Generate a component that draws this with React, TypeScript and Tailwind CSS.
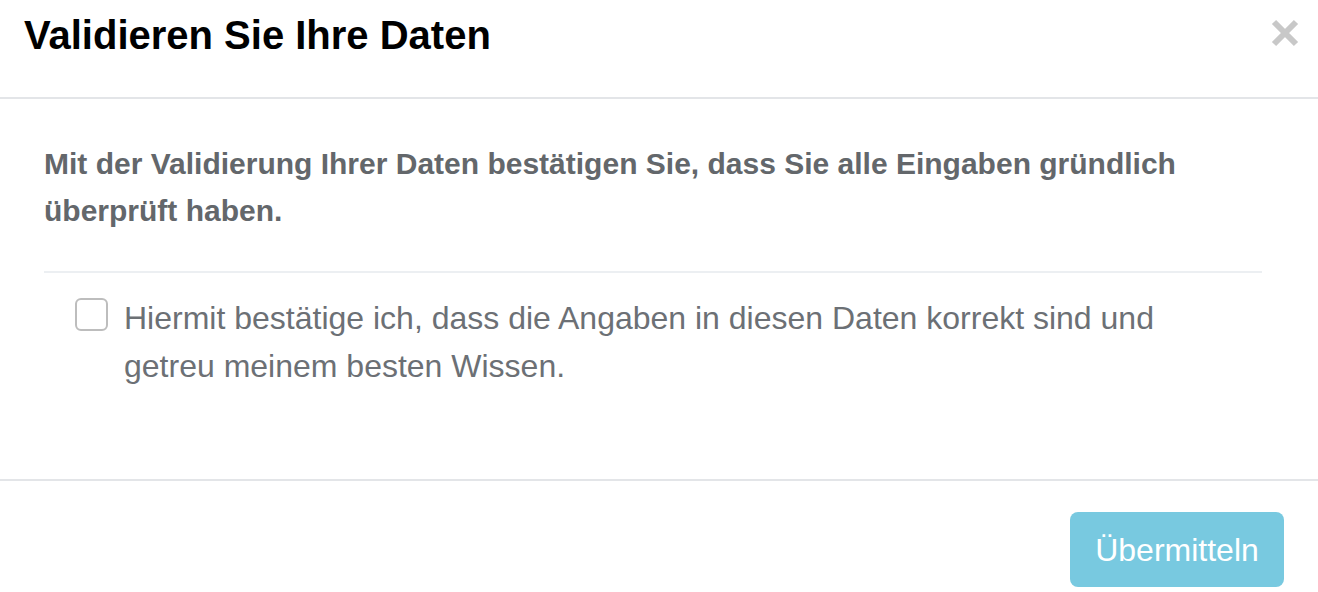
import React from 'react';

const App = () => {
  return (
    <div className="w-[1318px] h-[592px] bg-white overflow-hidden font-['Liberation_Sans',Arial,sans-serif]">
      <div className="flex items-start justify-between h-[99px] pl-6 pr-4 pt-[15px] border-b-2 border-[#e3e5e8]">
        <h1 className="text-[40px] font-bold text-black leading-none">Validieren Sie Ihre Daten</h1>
        <button className="mt-[1px] text-[#c8c8c8]" aria-label="Schließen">
          <svg width="34" height="34" viewBox="0 0 34 34">
            <path d="M6 6 L28 28 M28 6 L6 28" stroke="currentColor" strokeWidth="6" />
          </svg>
        </button>
      </div>

      <div className="pt-[41px] pl-11 pr-14 h-[382px] border-b-2 border-[#e3e5e8]">
        <p className="text-[30px] font-bold leading-[47px] text-[#63676b]">
          Mit der Validierung Ihrer Daten bestätigen Sie, dass Sie alle Eingaben gründlich überprüft haben.
        </p>
        <div className="mt-[37px] border-t-2 border-[#eceff2]" />
        <label className="flex items-start gap-4 pl-[31px] pt-[21px] pr-20">
          <span className="mt-[4px] w-[33px] h-[33px] shrink-0 rounded-md border-2 border-[#bdbdbd] bg-white" />
          <span className="text-[32px] leading-[48px] text-[#6c7075]">
            Hiermit bestätige ich, dass die Angaben in diesen Daten korrekt sind und getreu meinem besten Wissen.
          </span>
        </label>
      </div>

      <div className="flex justify-end pt-[31px] pr-[34px]">
        <button className="w-[214px] h-[75px] rounded-lg bg-[#78c9e0] text-white text-[32px]">
          Übermitteln
        </button>
      </div>
    </div>
  );
};

export default App;
